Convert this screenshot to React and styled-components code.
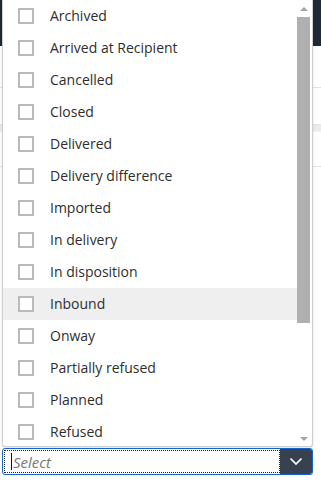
import React from 'react'
import styled, { createGlobalStyle } from 'styled-components'

const GlobalStyle = createGlobalStyle`
  html, body { margin: 0; padding: 0; background: #fff; }
  body { font-family: "Open Sans", "Liberation Sans", sans-serif; }
`

const STATUSES = [
  'Archived',
  'Arrived at Recipient',
  'Cancelled',
  'Closed',
  'Delivered',
  'Delivery difference',
  'Imported',
  'In delivery',
  'In disposition',
  'Inbound',
  'Onway',
  'Partially refused',
  'Planned',
  'Refused',
]

const Page = styled.div`
  position: relative;
  width: 321px;
  height: 486px;
  overflow: hidden;
`

const Header = styled.div`
  height: 46px;
  background: #1f2a37;
`

const BgRow = styled.div`
  height: ${p => p.h}px;
  border-bottom: 1px solid ${p => p.line || '#e3e3e3'};
  background: ${p => p.bg || '#fff'};
`

const Dropdown = styled.div`
  position: absolute;
  left: 2px;
  top: 0;
  width: 311px;
  display: flex;
  flex-direction: column;
`

const ListBox = styled.div`
  height: 447px;
  display: flex;
  background: #fff;
  border: 1px solid #cfcfcf;
  border-top: none;
  border-radius: 0 0 3px 3px;
  box-shadow: 0 1px 3px rgba(0, 0, 0, 0.12);
  box-sizing: border-box;
  overflow: hidden;
`

const Options = styled.ul`
  list-style: none;
  margin: 0;
  padding: 0;
  flex: 1;
`

const Option = styled.li`
  height: 32px;
  display: flex;
  align-items: center;
  gap: 16px;
  padding-left: 15px;
  background: ${p => (p.hover ? '#efefef' : 'transparent')};
  font-size: 14px;
  line-height: 18px;
  padding-bottom: 1px;
  box-sizing: border-box;
  color: #2e2e2e;
`

const Box = styled.span`
  width: 16px;
  height: 16px;
  margin-top: 1px;
  box-sizing: border-box;
  border: 2px solid #bababa;
  background: #fff;
`

const Scrollbar = styled.div`
  width: 13px;
  margin-right: 2px;
  display: flex;
  flex-direction: column;
  align-items: center;
`

const Arrow = styled.div`
  height: ${p => p.h}px;
  display: flex;
  align-items: center;
  justify-content: center;
  &::after {
    content: '';
    border-left: 4px solid transparent;
    border-right: 4px solid transparent;
    ${p => (p.down ? 'border-top' : 'border-bottom')}: 4px solid #a3a3a3;
  }
`

const Thumb = styled.div`
  width: 13px;
  height: 306px;
  background: #b0b0b0;
`

const Track = styled.div`
  flex: 1;
`

const Field = styled.div`
  height: 27px;
  margin-top: 1px;
  display: flex;
  border: 1px solid #1463d1;
  border-radius: 3px;
  box-sizing: border-box;
  overflow: hidden;
`

const Input = styled.div`
  flex: 1;
  display: flex;
  align-items: center;
  margin: 1px 0 1px 1px;
  border: 1px dotted #222;
  padding-left: 6px;
  gap: 1px;
  font-size: 15px;
  font-style: italic;
  color: #777;
`

const Caret = styled.span`
  width: 1px;
  height: 17px;
  background: #111;
`

const Toggle = styled.div`
  width: 32px;
  background: #37414f;
  display: flex;
  align-items: center;
  justify-content: center;
`

export default function App() {
  return (
    <Page>
      <GlobalStyle />
      <Header />
      <BgRow h={41} />
      <BgRow h={36} bg="#fff" />
      <BgRow h={6} bg="#ebebeb" line="#f3f3f3" />
      <BgRow h={34} />
      <Dropdown>
        <ListBox>
          <Options>
            {STATUSES.map(s => (
              <Option key={s} hover={s === 'Inbound'}>
                <Box />
                {s}
              </Option>
            ))}
          </Options>
          <Scrollbar>
            <Arrow h={17} />
            <Thumb />
            <Track />
            <Arrow h={14} down />
          </Scrollbar>
        </ListBox>
        <Field>
          <Input>
            <Caret />
            Select
          </Input>
          <Toggle>
            <svg width="14" height="9" viewBox="0 0 14 9" fill="none">
              <path d="M1.5 1.5 L7 7 L12.5 1.5" stroke="#fff" strokeWidth="1.7" />
            </svg>
          </Toggle>
        </Field>
      </Dropdown>
    </Page>
  )
}
